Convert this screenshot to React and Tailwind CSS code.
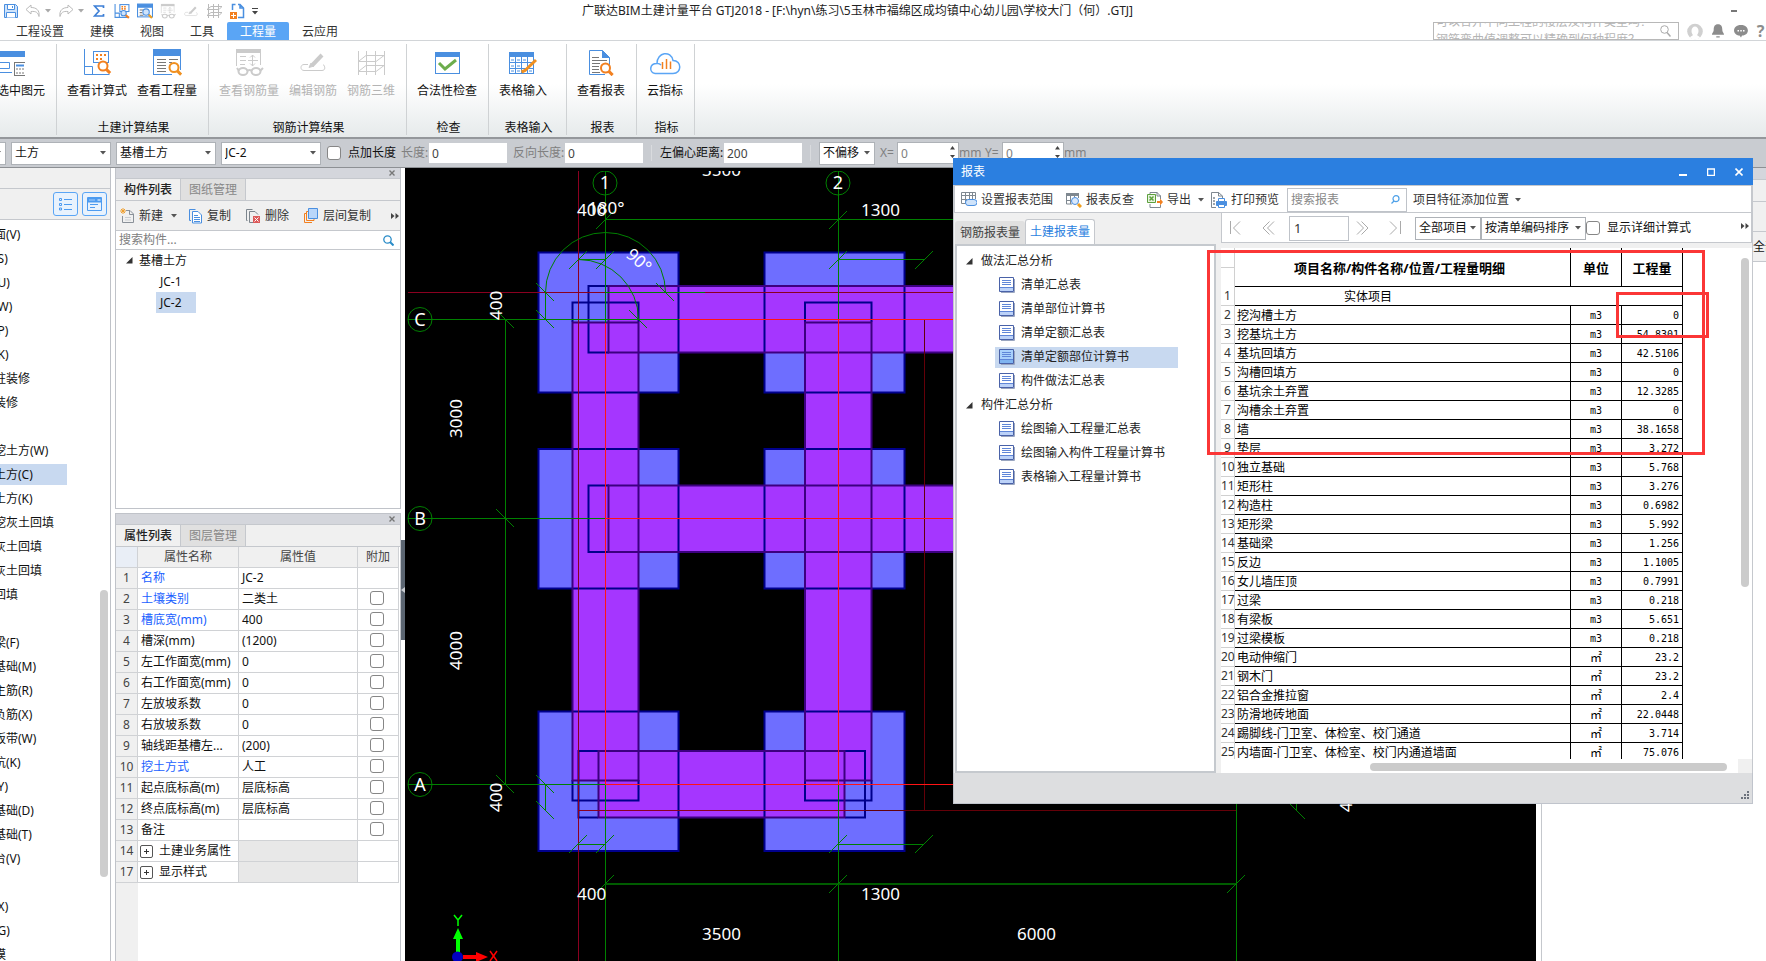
import React from "react";

const BLUE = "#4a8fe0";
const ORANGE = "#f28020";

/* ---------- small shared pieces ---------- */

function Caret({ className = "" }) {
  return (
    <svg className={"pointer-events-none shrink-0 " + className} width="6" height="4" viewBox="0 0 6 4" aria-hidden="true">
      <path d="M0 0h6L3 3.6z" fill="#555" />
    </svg>
  );
}

function Combo({ label, value, className = "" }) {
  return (
    <span className={"relative flex shrink-0 items-center " + className}>
      <select
        aria-label={label}
        defaultValue={value}
        className="h-full w-full appearance-none border border-[#aeb2b7] bg-white pl-[3px] text-xs text-[#111] outline-none"
      >
        <option>{value}</option>
      </select>
      <Caret className="absolute right-[5px]" />
    </span>
  );
}

function Check({ id, label }) {
  return (
    <input
      id={id}
      type="checkbox"
      aria-label={label}
      className="block h-[14px] w-[14px] shrink-0 appearance-none rounded-[3px] border border-[#868686] bg-white"
    />
  );
}

function Magnifier({ x, y, r = 5, c = ORANGE, w = 2, fill = "#fff" }) {
  return (
    <g>
      <path d={`M${x + r * 0.7} ${y + r * 0.7}l4 4`} stroke={c} strokeWidth={w + 1} />
      <circle cx={x} cy={y} r={r} stroke={c} strokeWidth={w} fill={fill} />
    </g>
  );
}

function More() {
  return (
    <svg width="8" height="6" viewBox="0 0 8 6" aria-hidden="true">
      <path d="M0 0l3.500 3L0 6zM4.500 0L8 3 4.500 6z" fill="#444" />
    </svg>
  );
}

/* ---------- icons drawn for the ribbon ---------- */

function FormulaIcon() {
  return (
    <svg width="30" height="28" viewBox="0 0 30 28" fill="none">
      <path d="M2.500 1v25.500h25M2.500 18.500h8v8" stroke={BLUE} />
      <rect x="11.500" y="3.500" width="15" height="11" stroke={BLUE} />
      <path d="M14 7h2m2 0h2m2 0h2M14 11h2m2 0h2" stroke={ORANGE} strokeWidth="2" />
      <Magnifier x={21} y={18} r={4.5} />
    </svg>
  );
}

function QuantityIcon() {
  return (
    <svg width="30" height="28" viewBox="0 0 30 28" fill="none">
      <rect x="1.500" y="1.500" width="27" height="25" stroke={BLUE} fill="#fff" />
      <path d="M1 1h28v7H1z" fill={BLUE} />
      <path d="M5 11.500h9M5 14.500h9M5 17.500h9M5 20.500h9M5 23.500h9M17 11.500h9M17 14.500h3" stroke="#777" />
      <path d="M20 22h10v6H20z" fill="#fff" />
      <Magnifier x={22} y={19.500} r={4.5} c="#f09020" />
    </svg>
  );
}

function GlassesIcon() {
  return (
    <svg width="30" height="28" viewBox="0 0 30 28" fill="none" stroke="#cbcbcb">
      <path d="M2.500 1.500h24V17M2.500 1v17" />
      <path d="M2 1h25v4H2z" fill="#cbcbcb" stroke="none" />
      <path d="M6 8.500h6M6 12.500h6M6 16.500h5M14 12.500h10M18.500 7v11M16 9.500c3-4 5 0 5 0m-5 6c3 4 5 0 5 0" />
      <ellipse cx="9" cy="23.500" rx="4.500" ry="3.500" strokeWidth="2" fill="#fff" />
      <ellipse cx="22" cy="23.500" rx="4.500" ry="3.500" strokeWidth="2" fill="#fff" />
      <path d="M13 23c1-1.500 4-1.500 5 0M5 23l-2-3M26 23l3-3" strokeWidth="2" />
    </svg>
  );
}

function EditRebarIcon() {
  return (
    <svg width="30" height="28" viewBox="0 0 30 28" fill="none" stroke="#cbcbcb">
      <path d="M10 16.500H6c-4 0-4 6 0 6h18c4 0 3-5 1-6" />
      <path d="M24 7L14 17.500" strokeWidth="4" />
      <path d="M13 15l-2 4.500 5-1.500" fill="#cbcbcb" />
    </svg>
  );
}

function GridIcon() {
  return (
    <svg width="30" height="28" viewBox="0 0 30 28" fill="none" stroke="#cbcbcb">
      <path d="M2.500 3v24M10.500 3v24M19.500 3v24M28.500 3v24M3 13l7-5.500h18M3 13.500h17l8-6M3 23l7-5.500h18M3 23.500h17l8-6" />
    </svg>
  );
}

function CheckIcon() {
  return (
    <svg width="30" height="28" viewBox="0 0 30 28" fill="none">
      <rect x="3.500" y="4.500" width="24" height="21" stroke={BLUE} fill="#fff" />
      <path d="M3 4h25v5H3z" fill={BLUE} />
      <path d="M7 15l6 6L24 12" stroke="#6cad4c" strokeWidth="3" />
    </svg>
  );
}

function TableInputIcon() {
  return (
    <svg width="30" height="28" viewBox="0 0 30 28" fill="none">
      <rect x="1.500" y="4.500" width="24" height="21" stroke={BLUE} fill="#fff" />
      <path d="M1 4h25v5H1z" fill={BLUE} />
      <path d="M2 14.500h23M2 20.500h23M7.500 9v16M13.500 9v16M19.500 9v16" stroke={BLUE} />
      <path d="M3 12h3M9 12h3M15 12h3M3 18h3M9 18h3M3 23h3M9 23h3M21 23h3" stroke={BLUE} />
      <path d="M28 12L17 22.500l-3.500 1.500" stroke="#f09020" strokeWidth="3" />
    </svg>
  );
}

function ReportIcon() {
  return (
    <svg width="30" height="28" viewBox="0 0 30 28" fill="none">
      <path d="M3.500 2.500h13l7 7v17h-20z" stroke={BLUE} fill="#fff" />
      <path d="M16 2l8 8h-8z" fill={BLUE} />
      <path d="M6 9.500h7M6 12.500h15M6 15.500h8M6 18.500h7M6 21.500h7M6 24.500h8" stroke="#777" />
      <path d="M19 23h8v5h-8z" fill="#fff" />
      <Magnifier x={19.500} y={20} r={4.5} />
    </svg>
  );
}

function CloudIcon() {
  return (
    <svg width="32" height="28" viewBox="0 0 32 28" fill="none">
      <path d="M6 25.500c-6-1-6-10 2-10C8 4 22 2 24 12.500c9 0 9 13 0 13H6M8 15.500c2-.5 3 .5 4 1.500" stroke="#5aa5f5" strokeWidth="1.500" />
      <path d="M13.500 14v7M17.500 11v10M21.500 13.500v7.500" stroke={ORANGE} strokeWidth="1.500" />
    </svg>
  );
}

function SelectedIcon() {
  return (
    <svg className="-ml-[22px]" width="30" height="28" viewBox="0 0 30 28" fill="none">
      <path d="M0 3h30v6H0z" fill={BLUE} />
      <path d="M0 24.500h17M0 14.500h14.500v6H0" stroke={BLUE} />
      <rect x="19.500" y="14.500" width="11" height="13" fill="#fff" stroke="#777" />
      <path d="M21 17.500h8" stroke={BLUE} strokeWidth="2" />
      <path d="M21 21h2m1 0h2m1 0h2m-8 4h2m1 0h2m1 0h2" stroke="#777" />
    </svg>
  );
}

/* ---------- title bar ---------- */

function QuickButton({ label, children, className = "" }) {
  return (
    <button type="button" aria-label={label} className={"flex h-[18px] shrink-0 items-center justify-center " + className}>
      {children}
    </button>
  );
}

function TitleBar() {
  return (
    <div className="flex h-[22px] shrink-0 items-center pl-[3px]">
      <div className="flex w-[579px] shrink-0 items-center">
        <QuickButton label="保存" className="w-4">
          <svg width="16" height="16" viewBox="0 0 16 16" fill="#cfe3fa" stroke={BLUE}>
            <path d="M1.500 1.500h11l2 2v11h-13z" />
            <path d="M4.500 2v4.500h7V2M3.500 14.500V9.500h9v5" fill="#fff" />
            <path d="M9.500 3v2" />
          </svg>
        </QuickButton>
        <QuickButton label="撤销" className="ml-[5px] w-[18px]">
          <svg width="16" height="14" viewBox="0 0 16 14" fill="none" stroke="#bbb">
            <path d="M6 1L1 5.500 6 10V7.500c5-.5 7 1 8 5C15 6 11 3.500 6 3.500z" />
          </svg>
        </QuickButton>
        <QuickButton label="撤销列表" className="w-3"><Caret className="opacity-50" /></QuickButton>
        <QuickButton label="恢复" className="ml-[3px] w-[18px]">
          <svg width="16" height="14" viewBox="0 0 16 14" fill="none" stroke="#bbb">
            <path d="M10 1l5 4.500L10 10V7.500c-5-.5-7 1-8 5C1 6 5 3.500 10 3.500z" />
          </svg>
        </QuickButton>
        <QuickButton label="恢复列表" className="w-3"><Caret className="opacity-50" /></QuickButton>
        <QuickButton label="汇总计算" className="ml-[3px] w-[18px]">
          <svg width="12" height="12" viewBox="0 0 12 12" fill="none" stroke="#3d7fd6" strokeWidth="1.700">
            <path d="M10.500 3V1h-9L6 6l-4.500 5h9V9" />
          </svg>
        </QuickButton>
        <QuickButton label="查看计算式" className="ml-[5px] w-[18px]">
          <svg width="16" height="16" viewBox="0 0 30 28" fill="none">
            <path d="M2 1v25h24M2 18h8v8" stroke={BLUE} strokeWidth="2" />
            <rect x="11" y="2" width="17" height="13" stroke={BLUE} strokeWidth="2" />
            <path d="M14 6h3m2 0h3M14 10h3m2 0h3" stroke={ORANGE} strokeWidth="3" />
            <Magnifier x={18} y={18} r={5} c={BLUE} fill="#cfe3fa" />
            <path d="M22 22l6 5" stroke={ORANGE} strokeWidth="4" />
          </svg>
        </QuickButton>
        <QuickButton label="查看工程量" className="ml-[5px] w-[18px]">
          <svg width="16" height="16" viewBox="0 0 30 28" fill="none">
            <rect x="1" y="1" width="28" height="24" stroke={BLUE} strokeWidth="2" />
            <path d="M1 1h28v7H1z" fill={BLUE} />
            <path d="M5 12h7M5 17h5M5 22h7" stroke="#777" strokeWidth="2" />
            <Magnifier x={17} y={16} r={6} c={BLUE} fill="#cfe3fa" />
            <path d="M22 21l6 6" stroke="#f0a020" strokeWidth="4" />
          </svg>
        </QuickButton>
        <QuickButton label="查看钢筋量" className="ml-[5px] w-[18px]">
          <span className="flex h-4 w-4 items-center justify-center [&>svg]:h-4 [&>svg]:w-4 [&>svg]:shrink-0"><GlassesIcon /></span>
        </QuickButton>
        <QuickButton label="编辑钢筋" className="ml-[5px] w-[18px]">
          <span className="flex h-4 w-4 items-center justify-center [&>svg]:h-4 [&>svg]:w-4 [&>svg]:shrink-0"><EditRebarIcon /></span>
        </QuickButton>
        <QuickButton label="钢筋三维" className="ml-[5px] w-[18px]">
          <svg width="16" height="16" viewBox="0 0 16 16" fill="none" stroke="#bbb">
            <path d="M2.500 1v14M7.500 1v14M12.500 1v14M1 6.500L5 3.500h11M1 6.500h12l3-3M1 12.500l4-3h11M1 12.500h12l3-3" />
          </svg>
        </QuickButton>
        <QuickButton label="新增" className="ml-[5px] w-[18px]">
          <svg width="16" height="16" viewBox="0 0 16 16" fill="none">
            <path d="M3.500 7V1.500h3M9 1.500h2l3.500 3.500v9.500H9M11 1v4h4" stroke={BLUE} strokeWidth="1.500" />
            <path d="M1 9h7v7H1z" fill={ORANGE} />
            <path d="M4.500 10v5M2 12.500h5" stroke="#fff" />
          </svg>
        </QuickButton>
        <QuickButton label="自定义" className="ml-0 w-[18px]">
          <svg width="6" height="7" viewBox="0 0 6 7"><path d="M0 0h6v1H0zM0 3h6L3 6.500z" fill="#444" /></svg>
        </QuickButton>
      </div>
      <h1 className="whitespace-nowrap text-xs text-[#222]">
        广联达BIM土建计量平台 GTJ2018 - [F:\hyn\练习\5玉林市福绵区成均镇中心幼儿园\学校大门（何）.GTJ]
      </h1>
      <button type="button" aria-label="最小化" className="mr-[29px] ml-auto h-[2px] w-[6px] bg-[#777]" />
    </div>
  );
}

const tabs = ["工程设置", "建模", "视图", "工具", "工程量", "云应用"];

function TabBar() {
  return (
    <div className="flex h-[19px] shrink-0 items-stretch border-b border-[#d2d5d8] pl-[3px]">
      <nav className="flex">
        {tabs.map((t) => (
          <button
            key={t}
            type="button"
            className={
              t === "工程量"
                ? "rounded-t-[2px] bg-[#5aa5f5] px-[13px] pt-px text-xs leading-[18px] text-white"
                : "px-[13px] pt-px text-xs leading-[18px] text-[#333]"
            }
          >
            {t}
          </button>
        ))}
      </nav>
      <div className="ml-auto flex items-center">
        <div className="flex h-[18px] w-[246px] items-center overflow-hidden border border-[#b8b8b8] pl-[2px]">
          <div className="h-4 flex-1 overflow-hidden">
            <div className="-mt-[10px] text-xs leading-[18px] whitespace-nowrap text-[#b5b5b5]">
              可以合并不同工程的楼层及构件类型吗？
              <br />
              钢筋弯曲值调整可以精确到何种程度？
            </div>
          </div>
          <svg className="mr-[7px]" width="11" height="12" viewBox="0 0 11 12" fill="none" stroke="#aaa">
            <circle cx="4.500" cy="4.500" r="3.800" />
            <path d="M7 7.500l3.500 4" strokeWidth="1.500" />
          </svg>
        </div>
        <button type="button" aria-label="用户" className="ml-[8px]">
          <svg width="16" height="17" viewBox="0 0 16 17">
            <circle cx="8" cy="8.500" r="7.800" fill="#d0d0d0" />
            <path d="M4.500 8c0-6 7-6 7 0 0 2-1 3.500-1.500 4 1 1 2.500 1.500 3 2.500-2 2.500-8 2.500-10 0 .5-1 2-1.500 3-2.500C5.500 11.500 4.500 10 4.500 8z" fill="#fff" />
          </svg>
        </button>
        <button type="button" aria-label="通知" className="ml-[9px]">
          <svg width="12" height="14" viewBox="0 0 14 16" fill="#8c8c8c">
            <path d="M7 0c4 0 5 3 5 6 0 4 2 4 2 6.500H0C0 10 2 10 2 6c0-3 1-6 5-6zM5 14h4v1.500H5z" />
          </svg>
        </button>
        <button type="button" aria-label="消息" className="ml-[10px]">
          <svg width="14" height="14" viewBox="0 0 14 14">
            <path d="M7 1c9 0 9 10.500 1 10.500L7 13.500 5.500 11.500C-2 11 -2 1 7 1z" fill="#8c8c8c" />
            <path d="M3.500 6h1.500v1.500H3.500zM6.300 6h1.500v1.500H6.300zM9 6h1.500v1.500H9z" fill="#fff" />
          </svg>
        </button>
        <button type="button" aria-label="帮助" className="mr-[1px] ml-[8px] w-[9px] text-center text-base leading-none font-bold text-[#8c8c8c]">
          ?
        </button>
      </div>
    </div>
  );
}

/* ---------- ribbon ---------- */

function Tool({ label, icon, disabled }) {
  return (
    <button
      type="button"
      disabled={disabled}
      className={"flex flex-col items-center px-[5px] text-xs leading-4 whitespace-nowrap " + (disabled ? "text-[#b4b4b4]" : "text-[#111]")}
    >
      {icon}
      <span className="mt-[7px]">{label}</span>
    </button>
  );
}

function Group({ name, children, className = "" }) {
  return (
    <section className={"flex shrink-0 flex-col border-r border-[#cfd2d4] px-[5px] pt-[4px] " + className}>
      <div className="flex">{children}</div>
      <div className="mt-[21px] pl-[2px] text-center text-xs leading-4 text-[#111]">{name}</div>
    </section>
  );
}

function Ribbon() {
  return (
    <div className="flex h-[98px] shrink-0 items-stretch border-b-2 border-[#94979b] bg-linear-to-b from-white from-45% to-[#e6eaeb] pt-[3px] pb-[2px]">
      <Group name="" className="w-[57px] pl-0">
        <div className="-ml-[8px]"><Tool label="选中图元" icon={<SelectedIcon />} /></div>
      </Group>
      <Group name="土建计算结果" className="w-[152px]">
        <Tool label="查看计算式" icon={<FormulaIcon />} />
        <Tool label="查看工程量" icon={<QuantityIcon />} />
      </Group>
      <Group name="钢筋计算结果" className="w-[198px]">
        <Tool label="查看钢筋量" icon={<GlassesIcon />} disabled />
        <Tool label="编辑钢筋" icon={<EditRebarIcon />} disabled />
        <Tool label="钢筋三维" icon={<GridIcon />} disabled />
      </Group>
      <Group name="检查" className="w-[82px]"><Tool label="合法性检查" icon={<CheckIcon />} /></Group>
      <Group name="表格输入" className="w-[78px]"><Tool label="表格输入" icon={<TableInputIcon />} /></Group>
      <Group name="报表" className="w-[70px]"><Tool label="查看报表" icon={<ReportIcon />} /></Group>
      <Group name="指标" className="w-[58px]"><Tool label="云指标" icon={<CloudIcon />} /></Group>
    </div>
  );
}

function Field({ id, label, value, muted, className = "" }) {
  return (
    <span className={"flex items-center " + className}>
      <label htmlFor={id} className={muted ? "flex-1 text-[#808080]" : "flex-1 text-[#111]"}>{label}</label>
      <input id={id} defaultValue={value} className="h-5 w-[78px] bg-white pl-[3px] text-xs text-[#444] outline-none" />
    </span>
  );
}

function Spin({ id, label }) {
  return (
    <span className="flex items-center text-[#808080]">
      <label htmlFor={id} className="w-[17px]">{label}</label>
      <span className="relative flex">
        <input id={id} defaultValue="0" className="h-[22px] w-[62px] border border-[#aeb2b7] bg-white pl-[3px] text-xs text-[#808080] outline-none" />
        <svg className="absolute top-[4px] right-[4px]" width="5" height="12" viewBox="0 0 5 12"><path d="M0 3.500L2.500 0 5 3.500zM0 9h5l-2.500 3z" fill="#444" /></svg>
      </span>
      <span className="w-[26px]">mm</span>
    </span>
  );
}

function OptionBar() {
  return (
    <div className="flex h-[29px] shrink-0 items-center border-b border-[#8d9094] bg-[#c9ccd1] text-xs whitespace-nowrap">
      <Combo label="楼层" value="" className="-ml-[94px] h-[23px] w-[100px]" />
      <Combo label="构件类别" value="土方" className="ml-[5px] h-[23px] w-[100px]" />
      <Combo label="构件类型" value="基槽土方" className="ml-[5px] h-[23px] w-[100px]" />
      <Combo label="构件名称" value="JC-2" className="ml-[5px] h-[23px] w-[100px]" />
      <span className="ml-[6px] flex"><Check id="extra" label="点加长度" /></span>
      <label htmlFor="extra" className="ml-[7px] w-[53px] text-[#111]">点加长度</label>
      <Field id="len" label="长度:" value="0" muted className="w-[106px]" />
      <Field id="rlen" label="反向长度:" value="0" muted className="ml-[6px] w-[130px]" />
      <span className="ml-[8px] h-4 w-px bg-[#d9dbde]" />
      <Field id="ecc" label="左偏心距离:" value="200" className="ml-[8px] w-[142px]" />
      <span className="ml-[8px] h-4 w-px bg-[#d9dbde]" />
      <Combo label="偏移方式" value="不偏移" className="ml-[8px] h-[23px] w-[56px]" />
      <span className="ml-[5px] flex">
        <Spin id="ox" label="X=" />
        <Spin id="oy" label="Y=" />
      </span>
    </div>
  );
}

/* ---------- component navigator (left) ---------- */

const navItems = [
  "面(V)", "(S)", "(U)", "(W)", "(P)", "(K)", "柱装修", "装修", "", "挖土方(W)", "土方(C)", "土方(K)",
  "挖灰土回填", "灰土回填", "灰土回填", "回填", "", "梁(F)", "基础(M)", "主筋(R)", "负筋(X)", "板带(W)",
  "坑(K)", "(Y)", "基础(D)", "基础(T)", "台(V)", "", "(X)", "(G)", "模",
];

function Navigator() {
  return (
    <aside className="flex w-[111px] shrink-0 flex-col overflow-hidden border-r border-[#bfc2c8] bg-white">
      <div className="h-[21px] shrink-0 border-b border-[#c5c8cd] bg-[#f0f0f0]" />
      <div className="flex h-[31px] shrink-0 items-center justify-end gap-1 border-b border-[#c5c8cd] bg-[#f0f0f0] pr-[3px]">
        <button type="button" aria-label="列表视图" className="flex h-6 w-[25px] items-center justify-center rounded-[3px] border border-[#5aa5f5] bg-[#e8f2fd]">
          <svg width="14" height="14" viewBox="0 0 14 14" fill="none" stroke="#4d9bf0">
            <path d="M5 2.500h8M5 7.500h8M5 12.500h8M.5 1.500h2v2h-2zM.5 6.500h2v2h-2zM.5 11h2v2h-2z" />
          </svg>
        </button>
        <button type="button" aria-label="窗口视图" className="flex h-6 w-[25px] items-center justify-center rounded-[3px] border border-[#5aa5f5] bg-[#e8f2fd]">
          <svg width="15" height="14" viewBox="0 0 15 14" fill="none" stroke="#4d9bf0">
            <path d="M.5.5h14v13H.5z" />
            <path d="M1 1h13v4H1z" fill="#4d9bf0" />
            <path d="M2.500 3h1m1 0h1m1 0h1m3 0h3" stroke="#fff" />
            <path d="M3 7.500h8M3 10.500h5" />
          </svg>
        </button>
      </div>
      <div className="relative flex-1 overflow-hidden pt-[2px]">
        <ul className="text-xs whitespace-nowrap text-[#111]">
          {navItems.map((t, i) => (
            <li key={i} className="flex h-6 items-center">
              <span className={"h-[21px] leading-[21px] " + (t === "土方(C)" ? "w-[67px] bg-[#c8d9f0]" : "")}>
                <span className="-ml-1.5">{t}</span>
              </span>
            </li>
          ))}
        </ul>
        <div className="absolute top-[370px] right-[2px] h-[287px] w-2 rounded-full bg-[#cdcdcd]" />
      </div>
    </aside>
  );
}

/* ---------- component list / property list ---------- */

function PanelHead({ tabs: [a, b] }) {
  return (
    <>
      <div className="flex h-[11px] shrink-0 items-center justify-end border-b border-[#c5c8cd] bg-[#d4d6dc] pr-[5px]">
        <button type="button" aria-label="关闭">
          <svg width="6" height="6" viewBox="0 0 6 6" stroke="#777" strokeWidth="1.400"><path d="M.5.5l5 5m0-5l-5 5" /></svg>
        </button>
      </div>
      <div className="flex h-[22px] shrink-0 border-b border-[#c5c8cd] bg-[#f0f0f0] text-xs">
        <button type="button" className="w-[65px] border-r border-[#c5c8cd] pt-px font-medium text-[#222]">{a}</button>
        <button type="button" className="w-[65px] border-r border-[#c5c8cd] bg-[#e0e0e0] pt-px text-[#888]">{b}</button>
      </div>
    </>
  );
}

function Expander({ className = "" }) {
  return (
    <svg className={className} width="7" height="7" viewBox="0 0 7 7"><path d="M6.500 0v6.500H0z" fill="#333" /></svg>
  );
}

function ComponentList() {
  return (
    <section className="flex h-[341px] shrink-0 flex-col border border-t-0 border-[#c0c3c9] bg-white">
      <PanelHead tabs={["构件列表", "图纸管理"]} />
      <div className="flex h-[30px] shrink-0 items-center border-b border-[#c5c8cd] bg-[#f0f0f0] pt-px pl-[4px] text-xs whitespace-nowrap text-[#333]">
        <button type="button" className="flex w-[69px] items-center gap-1">
          <svg width="15" height="16" viewBox="0 0 15 16" fill="none">
            <path d="M6 2.500h4l3.500 3.500v8.500h-11V8M9.500 2.500v4h4" stroke="#8a9199" />
            <path d="M5 9.500h6M5 12h6" stroke="#c9cdd2" />
            <path d="M3 0v6M0 3h6M1 1l4 4m0-4L1 5" stroke="#f0a030" />
          </svg>
          新建
          <Caret className="ml-1" />
        </button>
        <button type="button" className="flex w-[57px] items-center gap-[5px]">
          <svg width="13" height="15" viewBox="0 0 13 15" fill="none" stroke={BLUE}>
            <path d="M2 11.500H.5V.5h6" />
            <path d="M3.500 2.500H9l3.500 3.500v8h-9z" fill="#fff" />
            <path d="M5 6.500h4M5 8.500h6M5 10.500h6M5 12.500h6" />
          </svg>
          复制
        </button>
        <button type="button" className="flex w-[58px] items-center gap-[4px]">
          <svg width="15" height="15" viewBox="0 0 15 15" fill="none" stroke="#7c858d">
            <path d="M1.500 11.500h-1V.5h6M3.500 13.500v-11H9l3 3M3.500 13.500h4" />
            <path d="M7 7h7v7H7z" fill="#dd5a5a" stroke="none" />
            <path d="M8.500 8.500l4 4m0-4l-4 4" stroke="#fff" />
          </svg>
          删除
        </button>
        <button type="button" className="flex items-center gap-[5px]">
          <svg width="14" height="16" viewBox="0 0 14 16" fill="none">
            <path d="M3 5.500H.5v9H8M5 3.500H2.500v9H10V11" stroke={ORANGE} />
            <path d="M4.500.5h9v10h-9z" fill="#b9d6fa" stroke={BLUE} />
          </svg>
          层间复制
        </button>
        <button type="button" aria-label="更多" className="mr-[1px] ml-auto"><More /></button>
      </div>
      <div className="flex h-[19px] shrink-0 items-center border-b border-[#c5c8cd] pr-[6px] pl-[3px]">
        <input aria-label="搜索构件" placeholder="搜索构件..." className="h-4 flex-1 text-xs outline-none placeholder:text-[#808080]" />
        <svg width="11" height="11" viewBox="0 0 11 11" fill="none" stroke="#2a8cc8" strokeWidth="1.300">
          <circle cx="4.500" cy="4.500" r="3.700" />
          <path d="M7 7l3.500 3.500" strokeWidth="2" />
        </svg>
      </div>
      <ul className="text-xs leading-[21px] text-[#111]">
        <li className="flex items-center"><Expander className="mr-[6px] ml-[10px]" />基槽土方</li>
        <li className="pl-11">JC-1</li>
        <li className="ml-10 w-10 bg-[#c8d9f0] pl-1">JC-2</li>
      </ul>
    </section>
  );
}

const props = [
  [1, "名称", "JC-2", true, false], [2, "土壤类别", "二类土", true, true], [3, "槽底宽(mm)", "400", true, true],
  [4, "槽深(mm)", "(1200)", false, true], [5, "左工作面宽(mm)", "0", false, true], [6, "右工作面宽(mm)", "0", false, true],
  [7, "左放坡系数", "0", false, true], [8, "右放坡系数", "0", false, true], [9, "轴线距基槽左...", "(200)", false, true],
  [10, "挖土方式", "人工", true, true], [11, "起点底标高(m)", "层底标高", false, true], [12, "终点底标高(m)", "层底标高", false, true],
  [13, "备注", "", false, true], [14, "土建业务属性", null, false, false], [17, "显示样式", null, false, false],
];

function PropertyList() {
  const cell = "h-[21px] border-r border-b border-[#d0d2d5] p-0";
  return (
    <section className="mt-[4px] flex min-h-0 flex-1 flex-col border border-b-0 border-[#c0c3c9] bg-white">
      <PanelHead tabs={["属性列表", "图层管理"]} />
      <table className="w-[283px] shrink-0 table-fixed border-separate border-spacing-0 text-xs leading-5 whitespace-nowrap text-[#111]">
        <colgroup>
          <col className="w-[22px]" />
          <col className="w-[101px]" />
          <col className="w-[119px]" />
          <col className="w-[41px]" />
        </colgroup>
        <thead>
          <tr className="bg-[#f0f0f0] text-[#444]">
            <th className={cell + " bg-[#e9eef6]"} aria-label="序号" />
            <th className={cell + " font-normal"}>属性名称</th>
            <th className={cell + " font-normal"}>属性值</th>
            <th className={cell + " font-normal"}>附加</th>
          </tr>
        </thead>
        <tbody>
          {props.map(([n, name, val, blue, chk]) => (
            <tr key={n}>
              <td className={cell + " bg-[#f0f0f0] text-center text-[#444]"}>{n}</td>
              <td className={cell + (blue ? " pl-[3px] text-[#1a5fff]" : " pl-[3px]")}>
                {val === null ? (
                  <span className="flex items-center gap-[6px]">
                    <button type="button" aria-label={"展开" + name} className="-ml-px h-[13px] w-[13px] rounded-[2px] border border-[#555]">
                      <svg className="mx-auto" width="5" height="5" viewBox="0 0 5 5" stroke="#333"><path d="M2.500 0v5M0 2.500h5" /></svg>
                    </button>
                    {name}
                  </span>
                ) : (
                  name
                )}
              </td>
              <td className={cell + (val === null ? " bg-[#e8e8e8]" : " pl-[3px]")}>{val}</td>
              <td className={cell}>
                {chk && <span className="-mt-[2px] flex justify-center pr-[2px]"><Check label={name + "附加"} /></span>}
              </td>
            </tr>
          ))}
        </tbody>
      </table>
      <div className="w-[22px] flex-1 bg-[#f0f0f0]" />
    </section>
  );
}

/* ---------- drawing canvas ---------- */

const slashH = (x, y) => `M${x - 9} ${y + 9}L${x + 9} ${y - 9}`;
const slashV = (x, y) => `M${x - 9} ${y - 9}L${x + 9} ${y + 9}`;

function Canvas() {
  return (
    <main className="min-w-0 flex-1 overflow-hidden bg-black">
      <svg width="1131" height="793" viewBox="405 168 1131 793" fontFamily="'Noto Sans', sans-serif" fontSize="17" fill="none">
        <defs>
          <clipPath id="view"><path d="M405 171h1131v790H405z" /></clipPath>
        </defs>
        <g clipPath="url(#view)">
          {[538.5, 764.5].map((x) =>
            [[252.5, 140], [449, 139.5], [711.5, 139.5]].map(([y, h]) => (
              <rect key={x + "-" + y} x={x} y={y} width="140" height={h} fill="#6e6eff" />
            ))
          )}
          <g fill="#a536ff">
            <path d="M572 322.500h66.500v458H572zM804.500 322.500h67v458h-67z" />
            <path d="M608.500 286H1236v66.500H608.500zM588.500 322.500h20v30h-20zM588.500 485.500H1236V552H588.500zM598.500 751h246v66.500h-246z" />
          </g>
          <g stroke="#00008c" strokeWidth="2">
            {[538.5, 764.5].map((x) =>
              [[252.5, 140], [449, 139.5], [711.5, 139.5]].map(([y, h]) => (
                <rect key={x + "-" + y} x={x} y={y} width="140" height={h} />
              ))
            )}
            <path d="M572.500 322v-19.500h66V322M805 322v-19.500h66.500V322M572.500 780v20.500h66V780M805 780v20.500h66.500V780" />
            <path d="M609 286h-20.500v66.500H609M609 485.500h-20.500V552H609M598 751h-19.500v66.500H598M845 751h20v66.500h-20" />
          </g>
          <g stroke="#3c0080" strokeWidth="2">
            <path d="M572.500 322.500h66v458h-66zM805 322.500h66.500v458H805z" />
            <path d="M1236 286H608.500v66.500H1236M1236 485.500H608.500V552H1236M598.500 751h246v66.500h-246z" />
          </g>
          <g stroke="#8a0020">
            <path d="M578.500 171v790M408 292.500h828M578.500 810.500h286" />
            <path d="M865 810.500h371M924.500 319v492" stroke="#640008" />
          </g>
          <g stroke="#008000">
            <circle cx="605" cy="183" r="12" />
            <circle cx="838" cy="183" r="12" />
            <circle cx="420" cy="319.500" r="12" />
            <circle cx="420" cy="518.500" r="12" />
            <circle cx="420" cy="784.500" r="12" />
            <path d="M605.500 171v152M838.500 171v149M605.500 784v177M838.500 784v177M1236.500 784v177" />
            <path d="M408 319.500h271M408 518.500h197M408 784.500h197M605 292.500h100" />
            <path d="M605 219.500h631M578 259.500h27M838 259.500h86M578 844.500h27M838 844.500h86" />
            <path d="M605 884h631" stroke="#005c00" strokeWidth="2" />
            <path d="M505.500 319v465M545.500 292v27M545.500 784v27M1296.500 784v27" />
            <path d="M545.500 292.500a60 60 0 0 1 120 0M578.500 259.500a60 60 0 0 1 60 60" />
            <path d={[[605, 220], [838, 220], [578, 260], [605, 260], [838, 260], [924, 260], [578, 844], [605, 844], [838, 844], [924, 844], [605, 884], [838, 884], [1236, 884]].map(([x, y]) => slashH(x, y)).join("")} />
            <path d={[[505, 319], [505, 518], [505, 784], [545, 292], [545, 319], [665, 292], [638, 319], [545, 784], [545, 810], [1296, 810]].map(([x, y]) => slashV(x, y)).join("")} />
          </g>
          <g stroke="#ff1414">
            <path d="M605.500 323v461M838.500 320v464" />
            <path d="M679 319.500h557M605 518.500h631M605 784.500h631" />
          </g>
          <g fill="#fff">
            <text x="605" y="189" textAnchor="middle" fontSize="18">1</text>
            <text x="838" y="189" textAnchor="middle" fontSize="18">2</text>
            <text x="420" y="326" textAnchor="middle" fontSize="18">C</text>
            <text x="420" y="525" textAnchor="middle" fontSize="18">B</text>
            <text x="420" y="791" textAnchor="middle" fontSize="18">A</text>
            <text x="702" y="176">3500</text>
            <text x="577" y="216">400</text>
            <text x="588" y="214">180°</text>
            <text x="861" y="216">1300</text>
            <text x="577" y="900">400</text>
            <text x="861" y="900">1300</text>
            <text x="702" y="940">3500</text>
            <text x="1017" y="940">6000</text>
            <text transform="translate(625 256) rotate(42)">90°</text>
            <text transform="translate(502 320) rotate(-90)">400</text>
            <text transform="translate(462 438) rotate(-90)">3000</text>
            <text transform="translate(462 670) rotate(-90)">4000</text>
            <text transform="translate(502 812) rotate(-90)">400</text>
            <text transform="translate(1352 812) rotate(-90)">400</text>
          </g>
          <path d="M458 928l5 11h-3v16h-4v-16h-3z" fill="#00ff00" />
          <path d="M488 957l-12 5v-3h-13v-4h13v-3z" fill="#ff0000" />
          <circle cx="457.500" cy="957" r="5.500" fill="#0000c0" />
          <path d="M454 915l4 5 4-5M458 920v6" stroke="#00ff00" strokeWidth="1.500" />
          <path d="M490 951l7 10M497 951l-7 10" stroke="#ff0000" strokeWidth="1.500" />
        </g>
      </svg>
    </main>
  );
}

/* ---------- right panel under the report window ---------- */

function RightPanel() {
  return (
    <aside className="flex w-[225px] shrink-0 flex-col border-l border-[#c5c8cd] bg-white">
      <div className="h-3 shrink-0 border-b border-[#c5c8cd] bg-[#d4d6dc]" />
      <div className="h-[22px] shrink-0 border-b border-[#c5c8cd] bg-[#f0f0f0]" />
      <div className="h-[30px] shrink-0 border-b border-[#c5c8cd] bg-[#f0f0f0]" />
      <div className="h-[30px] shrink-0 overflow-hidden border-b border-[#c5c8cd] bg-[#f0f0f0] pl-[211px] text-xs leading-[30px] whitespace-nowrap text-[#111]">
        全部
      </div>
    </aside>
  );
}

/* ---------- report window ---------- */

const reports = [
  ["做法汇总分析", ["清单汇总表", "清单部位计算书", "清单定额汇总表", "清单定额部位计算书", "构件做法汇总表"]],
  ["构件汇总分析", ["绘图输入工程量汇总表", "绘图输入构件工程量计算书", "表格输入工程量计算书"]],
];

const rows = [
  ["挖沟槽土方", "m3", "0"], ["挖基坑土方", "m3", "54.8301"], ["基坑回填方", "m3", "42.5106"], ["沟槽回填方", "m3", "0"],
  ["基坑余土弃置", "m3", "12.3285"], ["沟槽余土弃置", "m3", "0"], ["墙", "m3", "38.1658"], ["垫层", "m3", "3.272"],
  ["独立基础", "m3", "5.768"], ["矩形柱", "m3", "3.276"], ["构造柱", "m3", "0.6982"], ["矩形梁", "m3", "5.992"],
  ["基础梁", "m3", "1.256"], ["反边", "m3", "1.1005"], ["女儿墙压顶", "m3", "0.7991"], ["过梁", "m3", "0.218"],
  ["有梁板", "m3", "5.651"], ["过梁模板", "m3", "0.218"], ["电动伸缩门", "㎡", "23.2"], ["钢木门", "㎡", "23.2"],
  ["铝合金推拉窗", "㎡", "2.4"], ["防滑地砖地面", "㎡", "22.0448"], ["踢脚线-门卫室、体检室、校门通道", "㎡", "3.714"],
  ["内墙面-门卫室、体检室、校门内通道墙面", "㎡", "75.076"],
];

function DocIcon({ active }) {
  return (
    <svg className="shrink-0" width="16" height="16" viewBox="0 0 16 16" fill="none">
      <path d="M.5.5h14v14H.5z" fill={active ? "#a9d0fb" : "#fff"} stroke="#4a62a8" />
      <path d="M1 11h13v3H1z" fill={active ? "#7fb4f0" : "#bcd2f8"} />
      <path d="M3 3.500h9M3 5.500h9M3 7.500h9M1 10.500h13" stroke="#5f86d8" />
      <path d="M15.500 2v13.500H2" stroke="#9aa6c0" />
    </svg>
  );
}

function ReportToolbar() {
  return (
    <div className="flex h-[28px] shrink-0 items-center border border-[#c5c8cd] bg-white pt-px pl-[6px] text-xs whitespace-nowrap text-[#333]">
      <button type="button" className="flex w-[105px] items-center gap-1">
        <svg width="16" height="15" viewBox="0 0 16 15" fill="none" stroke="#7f8890">
          <path d="M.5.5h14V7M.5.5v11H5M.5 3.500h14M.5 7.500H6M4.500 0v11M8.500 0v7M11.500 0v7" />
          <path d="M7 7.500h6a3 3 0 0 1 0 6H8a3 3 0 0 1-1-6z" fill="#cfe3fa" stroke={BLUE} />
        </svg>
        设置报表范围
      </button>
      <button type="button" className="flex w-[81px] items-center gap-1">
        <svg width="16" height="16" viewBox="0 0 16 16" fill="none">
          <path d="M.5 1.500h12V6M.5 1v11H6M.5 8.500H5M4.500 2v10M8.500 2v3" stroke="#7f8890" />
          <path d="M0 1h13v3H0z" fill="#7f8890" />
          <circle cx="9" cy="9" r="3.500" fill="#dbe9fb" stroke={BLUE} />
          <path d="M12 12l3 3" stroke="#f0a020" strokeWidth="3" />
        </svg>
        报表反查
      </button>
      <button type="button" className="flex w-[64px] items-center gap-1">
        <svg width="16" height="16" viewBox="0 0 16 16" fill="none">
          <path d="M3 12v3.500h10.500V13M3 2V.5h7L13.500 4v3M10 0v4h4" stroke="#7f8890" />
          <path d="M.5 2.500h8v8h-8z" fill="#e7f3e0" stroke="#5da03c" />
          <path d="M2.500 4.500l4 4m0-4l-4 4" stroke="#5da03c" strokeWidth="1.500" />
          <path d="M10 9h3V6.500L16 10l-3 3.500V11h-3z" fill={ORANGE} />
        </svg>
        导出
        <Caret className="ml-[3px]" />
      </button>
      <button type="button" className="flex w-[76px] items-center gap-1">
        <svg width="16" height="16" viewBox="0 0 16 16" fill="none">
          <path d="M5 15.500H.5V.5h7L11.500 4v2M7.500 0v4h4" stroke="#7f8890" />
          <path d="M2 6h2M2 9h2M2 12h2" stroke="#7f8890" strokeWidth="1.500" />
          <path d="M5.500 9.500h10v4h-10z" fill={BLUE} stroke={BLUE} />
          <path d="M7.500 6.500h6v3h-6zM7.500 12.500h6v3h-6z" fill="#fff" stroke={BLUE} />
        </svg>
        打印预览
      </button>
      <div className="flex h-6 w-[120px] items-center border border-[#bfc3c9] pr-[6px] pl-[3px]">
        <input aria-label="搜索报表" placeholder="搜索报表" className="h-5 min-w-0 flex-1 text-xs outline-none placeholder:text-[#888]" />
        <svg width="9" height="9" viewBox="0 0 9 9" fill="none" stroke="#4da0e8" strokeWidth="1.200">
          <circle cx="5" cy="3.700" r="3" />
          <path d="M3 6L.5 8.500" />
        </svg>
      </div>
      <button type="button" className="ml-[6px] flex items-center gap-[6px]">
        项目特征添加位置
        <Caret />
      </button>
    </div>
  );
}

function PageButton({ label, d }) {
  return (
    <button type="button" aria-label={label} className="flex h-[22px] w-[33px] items-center justify-center pr-[6px]">
      <svg width="13" height="14" viewBox="0 0 13 14" fill="none" stroke="#aaa"><path d={d} /></svg>
    </button>
  );
}

function PagerBar() {
  return (
    <div className="flex h-[30px] shrink-0 items-center border border-t-0 border-[#c5c8cd] bg-white pt-px text-xs whitespace-nowrap">
      <PageButton label="首页" d="M1.500 0v13M11 .5L4.500 7l6.500 6.500" />
      <PageButton label="上一页" d="M7.500.5L1 7l6.500 6.500M12 .5L5.500 7l6.500 6.500" />
      <input aria-label="页码" defaultValue="1" className="ml-[1px] h-[25px] w-[60px] border border-[#bfc3c9] pl-[4px] text-[13px] text-[#333] outline-none" />
      <PageButton label="下一页" d="M1 .5L7.500 7 1 13.500M5.500.5L12 7l-6.500 6.500" />
      <PageButton label="末页" d="M1 .5L7.500 7 1 13.500M11.500 0v13" />
      <Combo label="项目范围" value="全部项目" className="h-[23px] w-[66px]" />
      <Combo label="排序方式" value="按清单编码排序" className="h-[23px] w-[105px]" />
      <span className="flex"><Check id="detail" label="显示详细计算式" /></span>
      <label htmlFor="detail" className="ml-[7px] text-[#111]">显示详细计算式</label>
      <button type="button" aria-label="更多" className="mr-[2px] mb-1 ml-auto"><More /></button>
    </div>
  );
}

function Sheet() {
  const num = "h-[19px] border-r border-b border-[#d0d0d0] p-0 text-center font-normal text-[#333]";
  const line = "h-[19px] border-r border-b border-black p-0 pt-[2px]";
  return (
    <div className="relative mt-[5px] flex-1 overflow-hidden bg-white">
      <div className="h-[511px] overflow-hidden">
        <table className="w-[462px] table-fixed border-separate border-spacing-0 text-xs leading-4 whitespace-nowrap text-black">
          <colgroup>
            <col className="w-[14px]" />
            <col className="w-[336px]" />
            <col className="w-[51px]" />
            <col className="w-[61px]" />
          </colgroup>
          <thead>
            <tr className="text-[13px]">
              <th className={num + " h-[39px] border-b-0 align-top"} aria-label="行号"><div className="h-5 border-b border-[#d0d0d0]" /></th>
              <th className={line + " pr-[6px] font-bold"}>项目名称/构件名称/位置/工程量明细</th>
              <th className={line + " font-bold"}>单位</th>
              <th className={line + " font-bold"}>工程量</th>
            </tr>
          </thead>
          <tbody>
            <tr>
              <td className={num}>1</td>
              <td colSpan={3} className={line + " pl-[109px]"}>实体项目</td>
            </tr>
            {rows.map(([name, unit, qty], i) => (
              <tr key={i}>
                <td className={num}>{i + 2}</td>
                <td className={line + " pl-[2px]"}>{name}</td>
                <td className={line + (unit === "m3" ? " text-center font-['DejaVu_Sans_Mono',monospace] text-[10px]" : " text-center")}>{unit}</td>
                <td className={line + " pr-[3px] text-right font-['DejaVu_Sans_Mono',monospace] text-[10px]"}>{qty}</td>
              </tr>
            ))}
          </tbody>
        </table>
      </div>
      <div className="absolute top-[10px] right-[3px] h-[329px] w-2 rounded-full bg-[#cbcbcb]" />
      <div className="absolute right-[25px] bottom-[2px] h-2 w-[357px] rounded-full bg-[#cbcbcb]" />
      <div className="absolute right-0 bottom-0 h-[14px] w-[14px] bg-[#f0f0f0]" />
    </div>
  );
}

function ReportWindow() {
  return (
    <div role="dialog" aria-label="报表" className="absolute top-[158px] left-[953px] flex h-[646px] w-[800px] flex-col bg-[#f0f0f0]">
      <header className="flex h-[27px] shrink-0 items-center bg-[#2b7fe0] pr-[10px] pl-2 text-xs text-white">
        <h2 className="flex-1">报表</h2>
        <div className="flex items-center gap-5">
          <button type="button" aria-label="最小化"><svg width="8" height="8" viewBox="0 0 8 8"><path d="M0 6h8v2H0z" fill="#fff" /></svg></button>
          <button type="button" aria-label="最大化"><svg width="8" height="8" viewBox="0 0 8 8" fill="none" stroke="#fff"><path d="M.5 1v6.500h7V1M0 1h8" strokeWidth="1.500" /></svg></button>
          <button type="button" aria-label="关闭"><svg width="8" height="8" viewBox="0 0 8 8" stroke="#fff" strokeWidth="1.600"><path d="M.5.5l7 7m0-7l-7 7" /></svg></button>
        </div>
      </header>
      <div className="flex min-h-0 flex-1 flex-col border-x border-[#c5c8cd]">
        <ReportToolbar />
        <div className="flex min-h-0 flex-1">
          <div className="flex w-[262px] shrink-0 flex-col pt-[6px] pl-px text-xs">
            <div className="flex h-[25px] shrink-0 items-end">
              <button type="button" className="h-[23px] w-[70px] rounded-t-[3px] bg-[#e0e0e0] text-[#444]">钢筋报表量</button>
              <button type="button" className="h-[25px] w-[70px] rounded-t-[3px] border border-b-0 border-[#c5c8cd] bg-white text-[#2b7fe0]">土建报表量</button>
            </div>
            <ul className="flex-1 border-2 border-[#c5c9ce] bg-white pt-[3px] whitespace-nowrap text-[#222]">
              {reports.map(([group, items]) => (
                <li key={group}>
                  <div className="flex h-6 items-center"><Expander className="mr-[8px] ml-[9px]" />{group}</div>
                  <ul>
                    {items.map((t) => (
                      <li key={t} className="flex h-6 items-center pl-[38px]">
                        <a
                          href="#report"
                          className={"flex h-[21px] w-[183px] items-center gap-[6px] pl-[4px] " + (t === "清单定额部位计算书" ? "bg-[#c8d9f0]" : "")}
                        >
                          <DocIcon active={t === "清单定额部位计算书"} />
                          {t}
                        </a>
                      </li>
                    ))}
                  </ul>
                </li>
              ))}
            </ul>
          </div>
          <div className="ml-[5px] flex min-w-0 flex-1 flex-col">
            <PagerBar />
            <Sheet />
          </div>
        </div>
      </div>
      <footer className="flex h-[31px] shrink-0 items-end justify-end border border-t-0 border-[#c0c4cc] bg-[#dddee0] pr-[3px] pb-[3px]">
        <svg width="9" height="9" viewBox="0 0 9 9" fill="#6c727c">
          <path d="M7 0h2v2H7zM4 3h2v2H4zM7 3h2v2H7zM1 6h2v2H1zM4 6h2v2H4zM7 6h2v2H7z" />
        </svg>
      </footer>
      <div className="pointer-events-none absolute top-[92px] left-[254px] h-[205px] w-[498px] border-3 border-[#fb3636]" />
      <div className="pointer-events-none absolute top-[134px] left-[663px] h-[46px] w-[93px] border-3 border-[#fb3636]" />
    </div>
  );
}

export default function App() {
  return (
    <div className="relative flex h-screen flex-col overflow-hidden bg-white font-['Noto_Sans','Noto_Sans_CJK_SC',sans-serif]">
      <TitleBar />
      <TabBar />
      <Ribbon />
      <OptionBar />
      <div className="flex min-h-0 flex-1">
        <Navigator />
        <div className="ml-1 flex w-[286px] shrink-0 flex-col">
          <ComponentList />
          <PropertyList />
        </div>
        <div className="w-1 shrink-0 pt-[372px]">
          <button type="button" aria-label="折叠面板" className="flex h-[100px] w-1 items-center bg-[#5c6672]">
            <svg width="4" height="6" viewBox="0 0 4 6"><path d="M4 0v6L0 3z" fill="#c9ccd1" /></svg>
          </button>
        </div>
        <Canvas />
        <div className="w-[5px] shrink-0" />
        <RightPanel />
      </div>
      <ReportWindow />
    </div>
  );
}
